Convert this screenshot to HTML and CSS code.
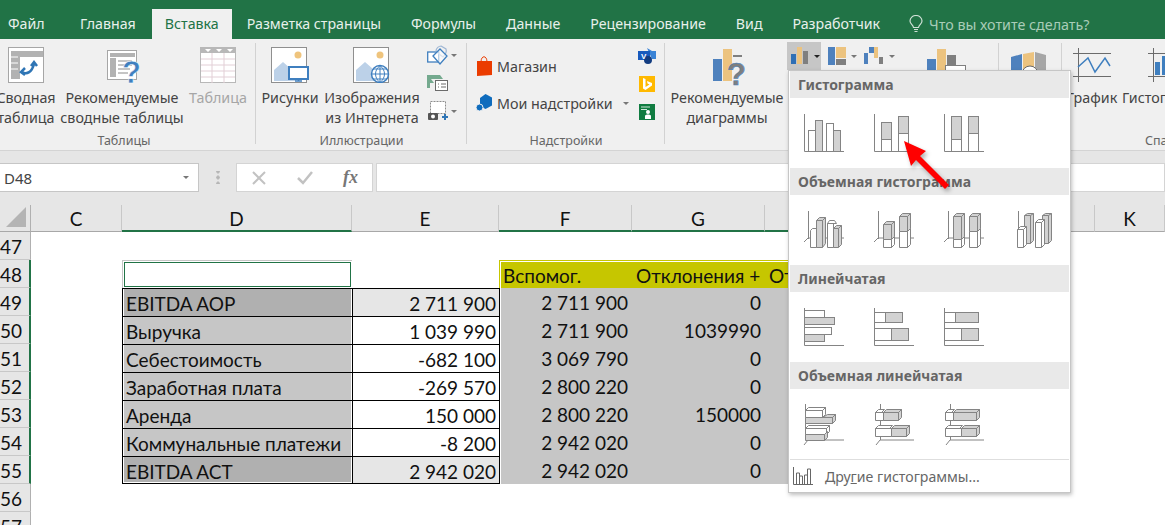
FILE: index.html
```html
<!DOCTYPE html>
<html lang="ru">
<head>
<meta charset="utf-8">
<title>Excel — Вставка</title>
<link rel="stylesheet" href="styles.css">
</head>
<body>
<svg class="defs" width="0" height="0" aria-hidden="true">
  <defs>
    <symbol id="ic-sheet" viewBox="0 0 36 36">
      <rect x=".5" y=".5" width="35" height="35" fill="#fff" stroke="#a6a6a6"/>
      <path d="M3 4h32v6H12v22H3z" fill="#b2b2b2"/>
      <path d="M3 10h7M3 16h7M3 22h7" stroke="#fff"/>
    </symbol>
    <symbol id="ic-photo" viewBox="0 0 38 36">
      <rect x=".5" y=".5" width="35" height="35" fill="#fff" stroke="#8f8f8f"/>
      <circle cx="27" cy="8" r="3.5" fill="#efc47d"/>
      <path d="M3 34V23l9-8 8 7 5 3v9z" fill="#bcd1e8"/>
    </symbol>
    <g id="axis"><path d="M.5 0V37.5H40" fill="none" stroke="#848484"/></g>
  </defs>
</svg>

<nav class="tabs">
  <span class="tab tab-file">Файл</span>
  <span class="tab">Главная</span>
  <span class="tab tab-active">Вставка</span>
  <span class="tab">Разметка страницы</span>
  <span class="tab">Формулы</span>
  <span class="tab">Данные</span>
  <span class="tab">Рецензирование</span>
  <span class="tab">Вид</span>
  <span class="tab">Разработчик</span>
  <span class="tell">
    <svg width="14" height="18" viewBox="0 0 14 18"><path d="M4.500 12.500C4 9.500 1 9 1 6a6 5.500 0 0 1 12 0c0 3-3 3.500-3.500 6.500zM5 14.500h4M5.500 16.500h3" fill="none" stroke="#cfe0d6" stroke-width="1.200"/></svg>
    Что вы хотите сделать?
  </span>
</nav>

<section class="ribbon">
  <div class="group group-tables">
    <div class="group-body">
      <div class="big w-68">
        <svg width="36" height="36" viewBox="0 0 36 36"><use href="#ic-sheet" width="36" height="36"/><path d="M14 25c5 3 10 0 12-8M23 19l3-4 3 4M17 21l-4 4 4 3" fill="none" stroke="#2f75b5" stroke-width="2.500"/></svg>
        <span>Сводная<br>таблица</span>
      </div>
      <div class="big w-124">
        <svg class="ic-shift-r" width="36" height="39" viewBox="0 0 36 39"><rect x=".5" y="3.500" width="29" height="29" fill="#fff" stroke="#a6a6a6"/><path d="M3 6h25v4H3zM3 11h6v19H3z" fill="#b2b2b2"/><path d="M11 14h14M11 18h14M11 22h12M11 26h10" stroke="#b2b2b2" stroke-width="1.500"/><text x="15" y="36" class="q">?</text></svg>
        <span>Рекомендуемые<br>сводные таблицы</span>
      </div>
      <div class="big w-68 muted">
        <svg width="36" height="36" viewBox="0 0 36 36"><rect width="36" height="36" fill="#fff"/><rect x=".5" y=".5" width="35" height="35" fill="none" stroke="#b8b8b8"/><rect width="36" height="6" fill="#b8b8b8"/><path d="M5 2h6l-3 3zM16 2h6l-3 3zM27 2h6l-3 3z" fill="#fff"/><path d="M1 12h34M1 18h34M1 24h34M1 30h34M12 6v30M24 6v30" stroke="#e2cfd6"/></svg>
        <span>Таблица</span>
      </div>
    </div>
    <div class="group-label">Таблицы</div>
  </div>

  <div class="group group-illus">
    <div class="group-body">
      <div class="big w-64">
        <svg width="38" height="36" viewBox="0 0 38 36"><use href="#ic-photo" width="38" height="36"/><rect x="18" y="20" width="19" height="12" fill="#fff" stroke="#3f7fbf" stroke-width="2"/><path d="M24 34h7M27.500 32v2" stroke="#3f7fbf" stroke-width="1.500"/></svg>
        <span>Рисунки</span>
      </div>
      <div class="big w-100">
        <svg width="38" height="36" viewBox="0 0 38 36"><use href="#ic-photo" width="38" height="36"/><circle cx="27" cy="27" r="8.500" fill="#fff" stroke="#3f7fbf" stroke-width="1.500"/><path d="M18.500 27h17M27 18.500v17M20 22h14M20 32h14M27 18.500c-6 5-6 12 0 17M27 18.500c6 5 6 12 0 17" fill="none" stroke="#3f7fbf"/></svg>
        <span>Изображения<br>из Интернета</span>
      </div>
      <div class="small-col">
        <div class="small-item"><svg width="22" height="20" viewBox="0 0 22 20"><rect x=".7" y="7" width="11" height="10" fill="#fff" stroke="#3f7fbf" stroke-width="1.300"/><path d="M14 1l5 3c1 3-1 6-3 8l-4-3-3-3c0-3 3-5 5-5z" fill="none" stroke="#9fb7d4" stroke-width="1.200"/><path d="M6 11l7-7 7 7-7 8z" fill="#fff" fill-opacity=".6" stroke="#3f7fbf" stroke-width="1.300"/></svg><i class="caret"></i></div>
        <div class="small-item"><svg width="22" height="16" viewBox="0 0 22 16"><path d="M0 0h13l3 4H4l3 4H3v5l-3 0z" fill="#74a98e"/><rect x="8.500" y="5.500" width="12" height="10" fill="#fff" stroke="#6b6b6b"/><path d="M11 9h1M14 9h5M11 12h1M14 12h5" stroke="#6b6b6b"/></svg></div>
        <div class="small-item"><svg width="22" height="20" viewBox="0 0 22 20"><rect x="3.500" y=".5" width="15" height="12" fill="#fff" stroke="#8c8c8c" stroke-dasharray="2 1"/><rect x="1" y="12" width="10" height="7" rx="1" fill="#555"/><circle cx="6" cy="15.500" r="2" fill="#fff"/><path d="M15 16h6M18 13v6" stroke="#2f75b5" stroke-width="2"/></svg><i class="caret"></i></div>
      </div>
    </div>
    <div class="group-label">Иллюстрации</div>
  </div>

  <div class="group group-addins">
    <div class="group-body addins-body">
      <div class="addin-col">
        <div class="addin-row">
          <svg width="16" height="20" viewBox="0 0 16 20"><path d="M5 6c0-7 6-7 6 0" fill="none" stroke="#eb3c00"/><path d="M1 5h15v14L1 20z" fill="#eb3c00"/></svg>
          <span>Магазин</span>
        </div>
        <div class="addin-row addin-my">
          <svg width="16" height="18" viewBox="0 0 16 18"><path d="M9.500 0l6.500 3.500v8L9.500 15 4 12V4z" fill="#0f6cbd"/><circle cx="3.500" cy="13.500" r="3.500" fill="#0f6cbd" stroke="#f0f0f0"/></svg>
          <span>Мои надстройки</span>
          <i class="caret caret-my"></i>
        </div>
      </div>
      <div class="addin-icons">
        <svg width="18" height="16" viewBox="0 0 18 16"><path d="M9 0l5 3h4v8h-4z" fill="#3a83d6"/><rect y="3" width="12" height="9" fill="#185abd"/><circle cx="10" cy="12" r="4" fill="#123c80"/><text x="3" y="10.500" class="v">V</text></svg>
        <svg width="16" height="16" viewBox="0 0 16 16"><rect width="16" height="16" fill="#ffb900"/><path d="M4 2l2.500 1v8l4-2.500-2-1L8 5l5 2v2.500L6.500 14 4 12.500z" fill="#fff"/></svg>
        <svg width="16" height="16" viewBox="0 0 16 16"><rect width="16" height="16" fill="#107c41"/><path d="M2 3h9M2 5.500h6" stroke="#cfe8da"/><circle cx="9" cy="8" r="2" fill="#fff"/><path d="M6 15v-3c0-2 6-2 6 0v3z" fill="#fff"/></svg>
      </div>
    </div>
    <div class="group-label">Надстройки</div>
  </div>

  <div class="group group-charts">
    <div class="group-body">
      <div class="big w-124">
        <svg class="ic-shift-c" width="36" height="38" viewBox="0 0 36 38"><rect y="10" width="9" height="22" fill="#4e81bd"/><rect x="10" width="9" height="32" fill="#ecc37f"/><rect x="20" y="6" width="9" height="2" fill="#7f7f7f"/><text x="14" y="36" class="q q-gray">?</text></svg>
        <span>Рекомендуемые<br>диаграммы</span>
      </div>
      <div class="chart-minis">
        <div class="mini mini-on"><svg width="18" height="18" viewBox="0 0 18 18"><rect y="7" width="5" height="10" fill="#2f6fb5"/><rect x="6" width="5" height="17" fill="#ecc37f"/><rect x="12" y="4" width="5" height="13" fill="#7f7f7f"/></svg><i class="caret caret-dark"></i></div>
        <div class="mini"><svg width="18" height="18" viewBox="0 0 18 18"><rect width="7" height="18" fill="#4e81bd"/><rect x="8" width="10" height="11" fill="#ecc37f"/><rect x="8" y="12" width="10" height="6" fill="#7f7f7f"/></svg><i class="caret"></i></div>
        <div class="mini"><svg width="20" height="18" viewBox="0 0 20 18"><path d="M0 6h4v11H0zM5 0h5v6H5z" fill="#4e81bd"/><rect x="10" width="4" height="11" fill="#ecc37f"/><rect x="15" y="10" width="4" height="7" fill="#7f7f7f"/></svg><i class="caret"></i></div>
      </div>
      <div class="big-pivot"><svg width="40" height="30" viewBox="0 0 40 30"><rect y="10" width="9" height="20" fill="#4e81bd"/><rect x="10" width="9" height="30" fill="#ecc37f"/><rect x="20" y="6" width="9" height="24" fill="#7f7f7f"/><rect x="18.500" y="16.500" width="20" height="13" fill="#fff" stroke="#7f7f7f"/></svg></div>
    </div>
    <div class="group-label"></div>
  </div>

  <div class="group group-tours">
    <div class="group-body">
      <div class="tour"><svg width="36" height="30" viewBox="0 0 36 30"><path d="M0 5l11-3v24H0z" fill="#4e81bd"/><path d="M12 2l11-2v26H12z" fill="#ecc37f"/><path d="M24 0l11 3v23H24z" fill="#a6a6a6"/><circle cx="19" cy="22" r="8" fill="#fff" stroke="#666"/></svg></div>
    </div>
    <div class="group-label"></div>
  </div>

  <div class="group group-spark">
    <div class="group-body">
      <div class="big w-60">
        <svg class="ic-down" width="38" height="34" viewBox="0 0 38 34"><path d="M5.500 0v34M0 5.500h38M0 28.500h38" stroke="#6b6b6b"/><path d="M5 19l10-9 7 14 10-14 5 8" fill="none" stroke="#3f7fbf" stroke-width="1.500"/></svg>
        <span>График</span>
      </div>
      <div class="big w-90">
        <svg class="ic-down" width="38" height="34" viewBox="0 0 38 34"><path d="M5.500 0v34M0 5.500h38M0 28.500h38" stroke="#6b6b6b"/><rect x="7" y="14" width="5" height="13" fill="#3f7fbf"/><rect x="14" y="8" width="5" height="19" fill="#3f7fbf"/></svg>
        <span>Гистограмма</span>
      </div>
    </div>
    <div class="group-label label-spark">Спарклайны</div>
  </div>
</section>

<section class="formula">
  <div class="namebox"><span>D48</span><i class="caret"></i></div>
  <div class="formula-grip"></div>
  <div class="formula-btns">
    <svg width="16" height="16" viewBox="0 0 16 16"><path d="M2 2l12 12M14 2L2 14" stroke="#c2c2c2" stroke-width="2"/></svg>
    <svg width="18" height="16" viewBox="0 0 18 16"><path d="M2 8l5 5L16 2" fill="none" stroke="#c2c2c2" stroke-width="2.500"/></svg>
    <span class="fx">fx</span>
  </div>
  <div class="formula-input"></div>
</section>

<section class="sheet">
  <div class="corner"><i></i></div>
  <div class="col">C</div>
  <div class="col col-sel">D</div>
  <div class="col">E</div>
  <div class="col col-sel">F</div>
  <div class="col col-sel">G</div>
  <div class="col col-sel"></div>
  <div class="col"></div>
  <div class="col">K</div>

  <div class="row">47</div><div class="fill"></div>

  <div class="row row-sel">48</div><div class="c-blank"></div>
  <div class="d-active"></div><div class="c-blank"></div>
  <div class="h-cell h-first">Вспомог.</div><div class="h-cell">Отклонения +</div><div class="h-cell">Отклонения -</div><div class="c-rest"></div>

  <div class="row row-sel">49</div><div class="c-blank"></div>
  <div class="d-cell d-dark">EBITDA AOP</div><div class="e-cell e-gray">2 711 900</div>
  <div class="g-cell g-first">2 711 900</div><div class="g-cell">0</div><div class="g-cell"></div><div class="c-rest"></div>

  <div class="row row-sel">50</div><div class="c-blank"></div>
  <div class="d-cell">Выручка</div><div class="e-cell">1 039 990</div>
  <div class="g-cell g-first">2 711 900</div><div class="g-cell">1039990</div><div class="g-cell"></div><div class="c-rest"></div>

  <div class="row row-sel">51</div><div class="c-blank"></div>
  <div class="d-cell">Себестоимость</div><div class="e-cell">-682 100</div>
  <div class="g-cell g-first">3 069 790</div><div class="g-cell">0</div><div class="g-cell"></div><div class="c-rest"></div>

  <div class="row row-sel">52</div><div class="c-blank"></div>
  <div class="d-cell">Заработная плата</div><div class="e-cell">-269 570</div>
  <div class="g-cell g-first">2 800 220</div><div class="g-cell">0</div><div class="g-cell"></div><div class="c-rest"></div>

  <div class="row row-sel">53</div><div class="c-blank"></div>
  <div class="d-cell">Аренда</div><div class="e-cell">150 000</div>
  <div class="g-cell g-first">2 800 220</div><div class="g-cell">150000</div><div class="g-cell"></div><div class="c-rest"></div>

  <div class="row row-sel">54</div><div class="c-blank"></div>
  <div class="d-cell">Коммунальные платежи</div><div class="e-cell">-8 200</div>
  <div class="g-cell g-first">2 942 020</div><div class="g-cell">0</div><div class="g-cell"></div><div class="c-rest"></div>

  <div class="row row-sel">55</div><div class="c-blank"></div>
  <div class="d-cell d-dark d-last">EBITDA ACT</div><div class="e-cell e-gray e-last">2 942 020</div>
  <div class="g-cell g-first">2 942 020</div><div class="g-cell">0</div><div class="g-cell"></div><div class="c-rest"></div>

  <div class="row">56</div><div class="fill"></div>
  <div class="row">57</div><div class="fill"></div>
</section>

<aside class="menu">
  <h3 class="menu-head">Гистограмма</h3>
  <div class="menu-row">
    <svg class="mi" viewBox="0 0 40 38"><rect class="w" x="4.500" y="16.500" width="7" height="21"/><rect class="g" x="11.500" y="6.500" width="7" height="31"/><rect class="w" x="22.500" y="9.500" width="7" height="28"/><rect class="g" x="29.500" y="16.500" width="7" height="21"/><use href="#axis"/></svg>
    <svg class="mi" viewBox="0 0 40 38"><rect class="g" x="7.500" y="8.500" width="10" height="17"/><rect class="w" x="7.500" y="25.500" width="10" height="12"/><rect class="g" x="24.500" y="2.500" width="10" height="17"/><rect class="w" x="24.500" y="19.500" width="10" height="18"/><use href="#axis"/></svg>
    <svg class="mi" viewBox="0 0 40 38"><rect class="g" x="7.500" y="2.500" width="10" height="23"/><rect class="w" x="7.500" y="25.500" width="10" height="12"/><rect class="g" x="24.500" y="2.500" width="10" height="17"/><rect class="w" x="24.500" y="19.500" width="10" height="18"/><use href="#axis"/></svg>
  </div>

  <h3 class="menu-head">Объемная гистограмма</h3>
  <div class="menu-row">
    <svg class="mi" viewBox="0 0 40 38"><path class="l" d="M4.500 0v28M0 31l4-4h36"/><path class="w" d="M6.500 19.500l2-2h4v19h-6z"/><path class="g" d="M12.500 9.500l3-3h6v26l-3 4h-6z"/><path class="l" d="M12.500 9.500h6v27M18.500 9.500l3-3"/><path class="w" d="M23.500 12.500l2-3h5l2 3zM23.500 12.500h6v24h-6z"/><path class="g" d="M29.500 17.500l3-3h5v19l-3 3h-5z"/><path class="l" d="M29.500 17.500h5v19M34.500 17.500l3-3"/></svg>
    <svg class="mi" viewBox="0 0 40 38"><path class="l" d="M4.500 0v28M0 31l4-4h36"/><path class="g" d="M9.500 13.500l3-3h8v15l-3 3h-8zM25.500 5.500l3-3h8v15l-3 3h-8z"/><path class="l" d="M9.500 13.500h8v15M17.500 13.500l3-3M25.500 5.500h8v15M33.500 5.500l3-3"/><path class="w" d="M9.500 28.500h8v8h-8zM17.500 28.500l3-3v8l-3 3zM25.500 20.500h8v16h-8zM33.500 20.500l3-3v16l-3 3z"/></svg>
    <svg class="mi" viewBox="0 0 40 38"><path class="l" d="M4.500 0v28M0 31l4-4h36"/><path class="g" d="M9.500 5.500l3-3h8v23l-3 3h-8zM25.500 5.500l3-3h8v15l-3 3h-8z"/><path class="l" d="M9.500 5.500h8v23M17.500 5.500l3-3M25.500 5.500h8v15M33.500 5.500l3-3"/><path class="w" d="M9.500 28.500h8v8h-8zM17.500 28.500l3-3v8l-3 3zM25.500 20.500h8v16h-8zM33.500 20.500l3-3v16l-3 3z"/></svg>
    <svg class="mi" viewBox="0 0 40 38"><path class="l" d="M4.500 0v28"/><path class="g" d="M10.500 4.500l3-2h6v27l-3 3h-6zM28.500 4.500l3-2h6v27l-3 3h-6z"/><path class="l" d="M10.500 4.500h6v28M16.500 4.500l3-2M28.500 4.500h6v28M34.500 4.500l3-2"/><path class="w" d="M3.500 18.500l3-3h6v18l-3 3h-6zM21.500 11.500l3-3h6v25l-3 3h-6z"/><path class="l" d="M3.500 18.500h6v18M9.500 18.500l3-3M21.500 11.500h6v25M27.500 11.500l3-3"/></svg>
  </div>

  <h3 class="menu-head">Линейчатая</h3>
  <div class="menu-row">
    <svg class="mi" viewBox="0 0 40 38"><rect class="w" x=".5" y="2.500" width="20" height="7"/><rect class="g" x=".5" y="9.500" width="30" height="7"/><rect class="w" x=".5" y="19.500" width="27" height="7"/><rect class="g" x=".5" y="26.500" width="20" height="7"/><use href="#axis"/></svg>
    <svg class="mi" viewBox="0 0 40 38"><rect class="w" x=".5" y="4.500" width="11" height="10"/><rect class="g" x="11.500" y="4.500" width="17" height="10"/><rect class="w" x=".5" y="20.500" width="17" height="12"/><rect class="g" x="17.500" y="20.500" width="17" height="12"/><use href="#axis"/></svg>
    <svg class="mi" viewBox="0 0 40 38"><rect class="w" x=".5" y="4.500" width="11" height="10"/><rect class="g" x="11.500" y="4.500" width="23" height="10"/><rect class="w" x=".5" y="20.500" width="17" height="12"/><rect class="g" x="17.500" y="20.500" width="17" height="12"/><use href="#axis"/></svg>
  </div>

  <h3 class="menu-head">Объемная линейчатая</h3>
  <div class="menu-row menu-row-last">
    <svg class="mi" viewBox="0 0 40 41"><path class="l" d="M0 41l4-5h36M1.500 0v36"/><path class="w" d="M1.500 6.500l3-3h17l-3 3zM1.500 6.500h17v7h-17zM18.500 6.500l3-3v7l-3 3z"/><path class="g" d="M1.500 13.500h27v6h-27zM18.500 13.500h10l3-3h-8zM28.500 13.500l3-3v6l-3 3z"/><path class="w" d="M1.500 24.500l3-3h21l-3 3zM1.500 24.500h21v6h-21zM22.500 24.500l3-3v6l-3 3z"/><path class="g" d="M1.500 30.500h19v6h-19zM20.500 30.500l3-3v6l-3 3z"/></svg>
    <svg class="mi" viewBox="0 0 40 41"><path class="l" d="M2 41l4-5h34M6.500 0v36"/><path class="w" d="M1.500 8.500l3-3h6l-3 3zM1.500 8.500h8v8h-8z"/><path class="g" d="M9.500 8.500l3-3h15l-3 3zM9.500 8.500h15v8h-15zM24.500 8.500l3-3v8l-3 3z"/><path class="w" d="M1.500 24.500l3-3h14l-3 3zM1.500 24.500h16v8h-16z"/><path class="g" d="M17.500 24.500l3-3h15l-3 3zM17.500 24.500h15v8h-15zM32.500 24.500l3-3v8l-3 3z"/></svg>
    <svg class="mi" viewBox="0 0 40 41"><path class="l" d="M2 41l4-5h34M6.500 0v36"/><path class="w" d="M1.500 8.500l3-3h6l-3 3zM1.500 8.500h8v8h-8z"/><path class="g" d="M9.500 8.500l3-3h23l-3 3zM9.500 8.500h23v8h-23zM32.500 8.500l3-3v8l-3 3z"/><path class="w" d="M1.500 24.500l3-3h14l-3 3zM1.500 24.500h16v8h-16z"/><path class="g" d="M17.500 24.500l3-3h15l-3 3zM17.500 24.500h15v8h-15zM32.500 24.500l3-3v8l-3 3z"/></svg>
  </div>

  <div class="menu-foot">
    <svg width="20" height="18" viewBox="0 0 20 18"><path d="M.5 0v17.500H20" fill="none" stroke="#666"/><path d="M3.500 17V6h3v11M6.500 17V9h3v8M11.500 17V8h3v9M14.500 17V2h3v15" fill="none" stroke="#666"/></svg>
    <span>Дру<u>г</u>ие гистограммы...</span>
  </div>
</aside>

<svg class="arrow" width="60" height="60" viewBox="0 0 60 60"><path d="M4 1l22 10-6 5 29 29-4 4-29-29-5 6z" fill="#f00"/></svg>
</body>
</html>
```

FILE: styles.css
```css
* { box-sizing: border-box; }
html, body { margin: 0; height: 525px; width: 1165px; overflow: hidden; background: #fff; }
body { position: relative; font-family: "Noto Sans", "Open Sans", sans-serif; font-size: 14.300px; color: #444; }
.defs { position: absolute; }
i { display: block; font-style: normal; }

.tabs { display: flex; height: 39px; background: #217346; color: #e8f0eb; align-items: flex-end; font-size: 14.200px; }
.tab { height: 30px; padding: 0 15px; line-height: 30px; white-space: nowrap; flex: none; }
.tab-file { padding: 0 8px; width: 65px; }
.tab-active { background: #f0f0f0; color: #217346; width: 80px; margin-left: 1px; padding: 0 13px; }
.tell { display: flex; align-items: center; gap: 6px; height: 30px; color: #a9cdb8; margin-left: 14px; font-size: 14.300px; }

.ribbon { display: flex; height: 112px; background: #f0f0f0; border-bottom: 1px solid #d4d4d4; overflow: hidden; }
.group { flex: none; display: flex; flex-direction: column; position: relative; }
.group::after { content: ""; position: absolute; right: 0; top: 4px; bottom: 6px; width: 1px; background: #d2d2d2; }
.group-body { height: 91px; display: flex; align-items: flex-start; }
.group-label { height: 20px; line-height: 22px; text-align: center; font-size: 12.500px; color: #666; }
.group-tables { width: 264px; margin-left: -8px; }
.group-illus { width: 211px; }
.group-illus .group-body { padding-left: 2px; }
.group-addins { width: 198px; }
.group-charts { width: 334px; }
.group-tours { width: 63px; }
.group-spark { width: 200px; }
.group-spark::after { display: none; }
.label-spark { text-align: left; padding-left: 83px; }

.big { flex: none; display: grid; grid-template-rows: 41px auto; justify-items: center; text-align: center; line-height: 20px; padding-top: 8px; white-space: nowrap; }
.ic-shift-r { margin-left: 6px; }
.ic-shift-c { margin: 2px 0 0 7px; }
.ic-down { margin-top: 1px; }
.w-60 { width: 60px; }
.w-64 { width: 64px; }
.w-68 { width: 68px; }
.w-90 { width: 90px; }
.w-100 { width: 100px; }
.w-124 { width: 124px; }
.muted { color: #a6a6a6; }
.q { font: 700 31px "Liberation Sans", sans-serif; fill: #3f7fbf; stroke: #fff; stroke-width: .5px; }
.q-gray { fill: #7f7f7f; stroke: #3f7fbf; }
.v { font: 700 8px "Liberation Sans", sans-serif; fill: #fff; }

.small-col { display: flex; flex-direction: column; gap: 8px; padding: 6px 0 0 5px; }
.small-item { display: flex; align-items: center; gap: 2px; height: 20px; }
.caret { width: 0; height: 0; border: 3.500px solid transparent; border-top-color: #777; border-bottom: 0; }
.caret-dark { border-top-color: #222; }

.addins-body { justify-content: space-between; padding: 9px 9px 0 9px; }
.addin-row { display: flex; align-items: center; gap: 5px; height: 20px; margin-top: 8px; white-space: nowrap; }
.addin-my { margin-top: 17px; }
.caret-my { margin-left: 5px; }
.addin-icons { display: flex; flex-direction: column; gap: 12px; align-items: center; }

.chart-minis { display: flex; height: 28px; margin-top: 3px; margin-left: -2px; }
.mini { display: flex; align-items: center; gap: 5px; height: 28px; padding-left: 7px; }
.mini-on { background: #c6c6c6; padding: 0 1px 0 4px; }
.big-pivot { padding: 10px 0 0 32px; }
.tour { padding: 13px 0 0 12px; }

.formula { height: 54px; background: #e6e6e6; display: flex; align-items: flex-start; padding-top: 12px; }
.namebox { width: 199px; height: 29px; background: #fff; border: 1px solid #c6c6c6; border-left: 0; display: flex; align-items: center; justify-content: space-between; padding: 0 9px 0 4px; color: #444; font-size: 15px; }
.formula-grip { width: 37px; height: 29px; background: radial-gradient(circle, #b5b5b5 1.500px, transparent 2px) center / 4px 6px repeat-y; background-clip: content-box; padding: 8px 0; }
.formula-btns { width: 137px; height: 29px; background: #fff; border: 1px solid #d4d4d4; display: flex; align-items: center; gap: 29px; padding-left: 14px; }
.fx { font: italic 700 18px "Liberation Serif", serif; color: #777; }
.formula-input { flex: 1; margin-left: 3px; height: 29px; background: #fff; border: 1px solid #d4d4d4; }

.sheet { display: grid; grid-template-columns: 31px 91px 230px 147px 133px 133px 133px 197px 70px; grid-template-rows: 27px; grid-auto-rows: 28px; font-family: Lato, "Noto Sans", sans-serif; font-size: 19px; color: #111; }
.corner { background: #e6e6e6; border-right: 1px solid #b0b0b0; border-bottom: 1px solid #a8a8a8; position: relative; }
.corner i { position: absolute; right: 4px; bottom: 4px; width: 0; height: 0; border-left: 20px solid transparent; border-bottom: 20px solid #b4b4b4; }
.col { background: #e6e6e6; border-right: 1px solid #c8c8c8; border-bottom: 1px solid #a8a8a8; text-align: center; line-height: 28px; }
.col-sel { border-bottom: 2px solid #217346; }
.row { background: #e6e6e6; border-right: 1px solid #b0b0b0; border-bottom: 1px solid #c8c8c8; text-align: right; padding-right: 10px; line-height: 29px; }
.row-sel { border-right: 2px solid #217346; }
.fill { grid-column: 2 / -1; }
.c-rest { grid-column: span 2; }
.d-cell { border-left: 1px solid #000; border-top: 1px solid #000; padding-left: 3px; background: #c6c6c6; line-height: 29px; white-space: nowrap; box-shadow: inset 1px 0 #fff, inset -1px 0 #fff; }
.d-active { background: #fff; border: 1px solid #c6c6c6; border-width: 1px 0 0 1px; box-shadow: inset 0 0 0 1px #fff, inset 0 0 0 2px #217346; }
.d-dark { background: #b0b0b0; }
.d-last { border-bottom: 1px solid #000; box-shadow: inset 1px 0 #fff, inset -1px 0 #fff, inset 0 -1px #fff; }
.e-cell { border-left: 1px solid #000; border-top: 1px solid #000; text-align: right; padding-right: 3px; line-height: 29px; background: #fff; }
.e-gray { background: #e6e6e6; }
.e-last { border-bottom: 1px solid #000; }
.h-cell { background: #c6c600; border-top: 1px solid #c6c600; box-shadow: inset 0 1px #fff; padding-left: 4px; line-height: 30px; white-space: nowrap; overflow: hidden; }
.h-first { border-left: 1px solid #c6c600; padding-left: 3px; box-shadow: inset 0 1px #fff, inset 1px 0 #fff; }
.g-cell { background: #c6c6c6; text-align: right; padding-right: 4px; line-height: 30px; }
.g-first { border-left: 1px solid #000; box-shadow: inset 1px 0 #fff; }

.menu { position: absolute; left: 788px; top: 70px; width: 283px; height: 423px; background: #fff; border: 1px solid #c6c6c6; box-shadow: 1px 2px 4px rgba(0,0,0,.25); padding: 0 1px; }
.menu-head { margin: 0; height: 27px; line-height: 27px; background: #e9e9e9; padding-left: 8px; font-size: 14px; font-weight: 700; color: #666; }
.menu-row { height: 70px; display: flex; gap: 30px; padding: 16px 0 0 14px; }
.menu-row-last { padding-top: 15px; }
.mi { width: 40px; height: 38px; flex: none; overflow: visible; }
.menu-row-last .mi { height: 41px; }
.w { fill: #fff; stroke: #848484; }
.g { fill: #d2d2d2; stroke: #848484; }
.l { fill: none; stroke: #848484; }
.menu-foot { border-top: 1px solid #dedede; height: 33px; display: flex; align-items: center; gap: 12px; padding-left: 3px; color: #666; font-size: 14.100px; }

.arrow { position: absolute; left: 900px; top: 140px; filter: drop-shadow(2px 3px 2px rgba(0,0,0,.3)); }
```
